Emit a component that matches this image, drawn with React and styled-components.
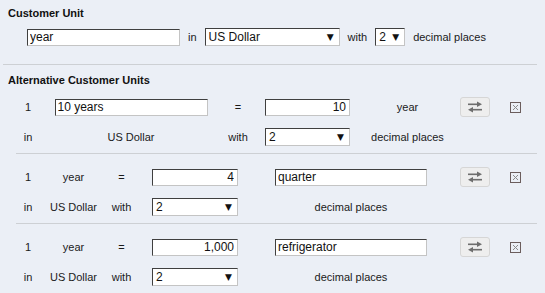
import React from "react";
import styled, { createGlobalStyle } from "styled-components";

const Global = createGlobalStyle`
  html, body { margin: 0; padding: 0; background: #ebeff6; }
  body { font-family: "Liberation Sans", Arial, sans-serif; font-size: 11px; color: #1a1a1a; }
`;

const Page = styled.div`
  width: 545px;
  padding-top: 6px;
`;

const Heading = styled.div`
  font-weight: bold;
  font-size: 11px;
  line-height: 14px;
  padding-left: 8px;
  margin-top: ${(p) => p.$top || 0}px;
  color: #111;
`;

const CustRow = styled.div`
  display: flex;
  align-items: center;
  gap: 8px;
  height: 20px;
  margin-top: 7px;
  padding-left: 27px;
`;

const Label = styled.span`
  font-size: 11px;
  line-height: 14px;
  white-space: nowrap;
  color: #1a1a1a;
`;

const Divider = styled.div`
  height: 1px;
  background: #cdd0d4;
  margin: ${(p) => p.$top}px 8px 0 3px;
`;

const TextInput = styled.input`
  box-sizing: border-box;
  width: ${(p) => p.$w}px;
  height: 17px;
  margin: 0;
  padding: 0 ${(p) => (p.$num ? 3 : 2)}px;
  font-family: "Liberation Sans", Arial, sans-serif;
  font-size: 12px;
  color: #111;
  text-align: ${(p) => (p.$num ? "right" : "left")};
  background: #fff;
  border: 1px solid;
  border-color: #3f3f3f #c4c4c4 #c4c4c4 #3f3f3f;
  outline: none;
`;

const SelectBox = styled.div`
  box-sizing: border-box;
  width: ${(p) => p.$w}px;
  height: 18px;
  display: flex;
  align-items: center;
  justify-content: space-between;
  padding: 0 5px 0 3px;
  font-size: 12px;
  color: #111;
  background: #fff;
  border: 1px solid;
  border-color: #3f3f3f #c4c4c4 #c4c4c4 #3f3f3f;
`;

const Arrow = styled.span`
  font-family: "DejaVu Sans", sans-serif;
  font-size: 9px;
  line-height: 9px;
  color: #111;
`;

const AltList = styled.div`
  margin-left: 16px;
  width: 521px;
`;

const AltUnit = styled.div`
  display: grid;
  grid-template-columns: ${(p) => p.$cols};
  grid-template-rows: 20px 20px;
  row-gap: 10px;
  align-items: center;
  justify-items: center;
  padding: ${(p) => p.$top}px 0 6px 0;
  border-bottom: ${(p) => (p.$last ? "none" : "1px solid #cdd0d4")};
`;

const SwapButton = styled.button`
  box-sizing: border-box;
  width: 30px;
  height: 20px;
  padding: 0;
  display: flex;
  align-items: center;
  justify-content: center;
  background: #eeeeee;
  border: 1px solid #d6d6d6;
  border-radius: 3px;
`;

const RemoveBox = styled.span`
  display: inline-flex;
  width: 11px;
  height: 11px;
`;

function Select({ w, value }) {
  return (
    <SelectBox $w={w}>
      <span>{value}</span>
      <Arrow>▼</Arrow>
    </SelectBox>
  );
}

function SwapIcon() {
  return (
    <svg width="16" height="12" viewBox="0 0 16 12">
      <rect x="1" y="2.5" width="10" height="1.6" fill="#6e6e6e" />
      <polygon points="10,0.5 15,3.3 10,6.1" fill="#6e6e6e" />
      <rect x="5" y="7.9" width="10" height="1.6" fill="#6e6e6e" />
      <polygon points="6,5.9 1,8.7 6,11.5" fill="#6e6e6e" />
    </svg>
  );
}

function RemoveIcon() {
  return (
    <RemoveBox>
      <svg width="11" height="11" viewBox="0 0 11 11">
        <rect x="0.5" y="0.5" width="10" height="10" fill="none" stroke="#6b5d5d" />
        <path d="M3 3L8 8M8 3L3 8" stroke="#8a8a8a" strokeWidth="1" />
      </svg>
    </RemoveBox>
  );
}

const FIRST_COLS = "24px 182px 32px 107px 93px 42px 38px";
const OTHER_COLS = "24px 67px 29px 118px 194px 53px 28px";

const others = [
  { amount: "4", name: "quarter" },
  { amount: "1,000", name: "refrigerator" },
];

export default function App() {
  return (
    <Page>
      <Global />
      <Heading>Customer Unit</Heading>
      <CustRow>
        <TextInput $w={153} value="year" readOnly />
        <Label>in</Label>
        <Select w={135} value="US Dollar" />
        <Label>with</Label>
        <Select w={30} value="2" />
        <Label>decimal places</Label>
      </CustRow>
      <Divider $top={17} />
      <Heading $top={8}>Alternative Customer Units</Heading>
      <AltList>
        <AltUnit $cols={FIRST_COLS} $top={10}>
          <Label>1</Label>
          <TextInput $w={153} value="10 years" readOnly />
          <Label>=</Label>
          <TextInput $w={85} $num value="10" readOnly />
          <Label>year</Label>
          <SwapButton><SwapIcon /></SwapButton>
          <RemoveIcon />
          <Label>in</Label>
          <Label>US Dollar</Label>
          <Label>with</Label>
          <Select w={85} value="2" />
          <Label>decimal places</Label>
        </AltUnit>
        {others.map((o, i) => (
          <AltUnit key={o.name} $cols={OTHER_COLS} $top={13} $last={i === others.length - 1}>
            <Label>1</Label>
            <Label>year</Label>
            <Label>=</Label>
            <TextInput $w={86} $num value={o.amount} readOnly />
            <TextInput $w={152} value={o.name} readOnly />
            <SwapButton><SwapIcon /></SwapButton>
            <RemoveIcon />
            <Label>in</Label>
            <Label>US Dollar</Label>
            <Label>with</Label>
            <Select w={86} value="2" />
            <Label>decimal places</Label>
          </AltUnit>
        ))}
      </AltList>
    </Page>
  );
}
